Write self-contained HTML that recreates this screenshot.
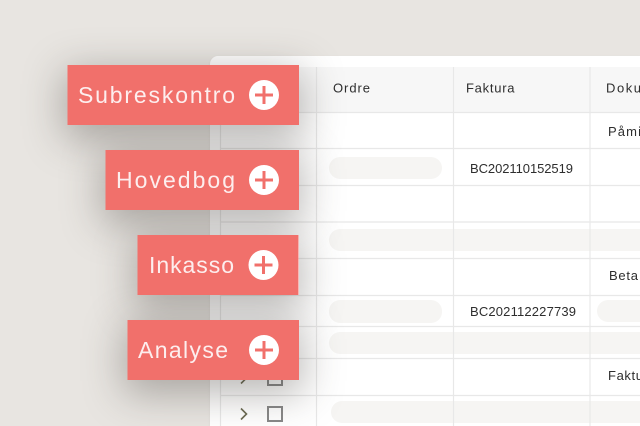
<!DOCTYPE html>
<html><head><meta charset="utf-8">
<style>
html,body{margin:0;padding:0;width:640px;height:426px;overflow:hidden;background:#e8e5e1}
#r{position:relative;width:640px;height:426px;overflow:hidden;background:#e8e5e1}
.card{position:absolute;left:210px;top:56px;width:430px;height:370px;background:#fff;border-radius:8px 0 0 0;box-shadow:0 1px 3px rgba(0,0,0,.05)}
.lab{position:absolute;height:60px;box-shadow:0 10px 40px 4px rgba(60,55,50,.36)}
svg{position:absolute;left:0;top:0}
text{font-family:"Liberation Sans",sans-serif}
</style></head><body><div id="r">
<div class="card"></div>
<svg width="640" height="426" viewBox="0 0 640 426">
<rect x="220" y="67" width="420" height="45" fill="#f7f7f7"/>
<g fill="#f6f5f3">
<rect x="329" y="157" width="113" height="22" rx="11"/>
<rect x="329" y="229" width="340" height="22" rx="11"/>
<rect x="329" y="300" width="113" height="23" rx="11"/>
<rect x="597" y="300" width="80" height="22" rx="11"/>
<rect x="329" y="332" width="340" height="22" rx="11"/>
<rect x="331" y="401" width="340" height="22" rx="11"/>
</g>
<g stroke="#e8e8e8" stroke-width="1.200">
<path d="M220 112.500H640M220 148.500H640M220 185.500H640M220 222H640M220 258.500H640M220 295.500H640M220 326.500H640M220 358.500H640M220 395.500H640"/>
<path d="M220.500 67V426M316.500 67V426M453.500 67V426M590 67V426"/>
</g>
<g fill="#2e2e2e" font-size="13">
<text x="333" y="92.500" textLength="37" lengthAdjust="spacing">Ordre</text>
<text x="466" y="92.500" textLength="48.500" lengthAdjust="spacing">Faktura</text>
<text x="606" y="92.500" textLength="35" lengthAdjust="spacing">Doku</text>
<text x="608" y="136" textLength="33" lengthAdjust="spacing">Påmi</text>
<text x="470" y="173" textLength="103" lengthAdjust="spacing">BC202110152519</text>
<text x="609" y="280" textLength="29" lengthAdjust="spacing">Beta</text>
<text x="470" y="316" textLength="106" lengthAdjust="spacing">BC202112227739</text>
<text x="608" y="380" textLength="35" lengthAdjust="spacing">Faktu</text>
</g>
<g fill="none" stroke="#888" stroke-width="2">
<rect x="268" y="407" width="14" height="14"/>
<rect x="268" y="371" width="14" height="14"/>
</g>
<g fill="none" stroke="#6b6a52" stroke-width="1.600">
<path d="M241 408.500L246.500 414L241 419.500"/>
<path d="M241 372.500L246.500 378L241 383.500"/>
</g>
</svg>
<div class="lab" style="left:67.500px;top:65px;width:231.500px"></div>
<div class="lab" style="left:105.500px;top:150px;width:193.500px"></div>
<div class="lab" style="left:137.500px;top:235px;width:161px"></div>
<div class="lab" style="left:127.500px;top:320px;width:171.500px"></div>
<svg width="640" height="426" viewBox="0 0 640 426">
<g fill="#f1706b">
<rect x="67.500" y="65" width="231.500" height="60"/>
<rect x="105.500" y="150" width="193.500" height="60"/>
<rect x="137.500" y="235" width="161" height="60"/>
<rect x="127.500" y="320" width="171.500" height="60"/>
</g>
<g fill="#fdeeee" font-size="23">
<text x="78" y="103" textLength="157" lengthAdjust="spacing">Subreskontro</text>
<text x="116" y="188" textLength="119" lengthAdjust="spacing">Hovedbog</text>
<text x="149" y="273" textLength="85" lengthAdjust="spacing">Inkasso</text>
<text x="138" y="358" textLength="90" lengthAdjust="spacing">Analyse</text>
</g>
<g fill="#fff">
<circle cx="264" cy="95" r="15"/>
<circle cx="264" cy="180" r="15"/>
<circle cx="263.500" cy="265" r="15"/>
<circle cx="264" cy="350" r="15"/>
</g>
<g stroke="#f1706b" stroke-width="3" fill="none">
<path d="M255 95H273M264 86V104"/>
<path d="M255 180H273M264 171V189"/>
<path d="M254.500 265H272.500M263.500 256V274"/>
<path d="M255 350H273M264 341V359"/>
</g>
</svg>
</div></body></html>
